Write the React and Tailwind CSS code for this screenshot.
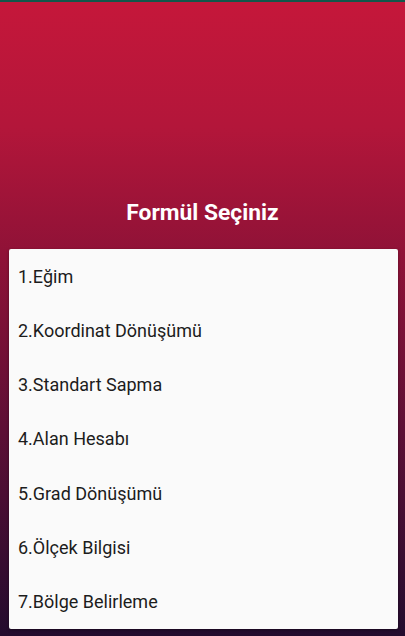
export default function App() {
  const items = [
    "1.Eğim",
    "2.Koordinat Dönüşümü",
    "3.Standart Sapma",
    "4.Alan Hesabı",
    "5.Grad Dönüşümü",
    "6.Ölçek Bilgisi",
    "7.Bölge Belirleme",
  ];
  return (
    <div
      className="w-[405px] h-[636px] flex flex-col bg-[linear-gradient(to_bottom,#c5173a_0%,#b3163a_20%,#8f1237_40%,#5c0f35_68%,#230c2e_100%)] overflow-hidden"
      style={{ fontFamily: "Roboto, 'Noto Sans', sans-serif" }}
    >
      <div className="h-[2px] bg-[#11574a]" />
      <h1 className="mt-[199px] text-center text-white font-bold text-[22.8px] leading-[24px]">Formül Seçiniz</h1>
      <div className="ml-[9px] mr-[7px] mt-[24px] h-[380px] bg-[#fafafa] rounded-[2px] shadow-[0_1px_3px_rgba(0,0,0,0.4)] flex flex-col">
        {items.map((t) => (
          <div key={t} className="h-[54.3px] flex items-center pl-[9px] text-[18px] text-[#1c1c1c]">
            {t}
          </div>
        ))}
      </div>
    </div>
  );
}
